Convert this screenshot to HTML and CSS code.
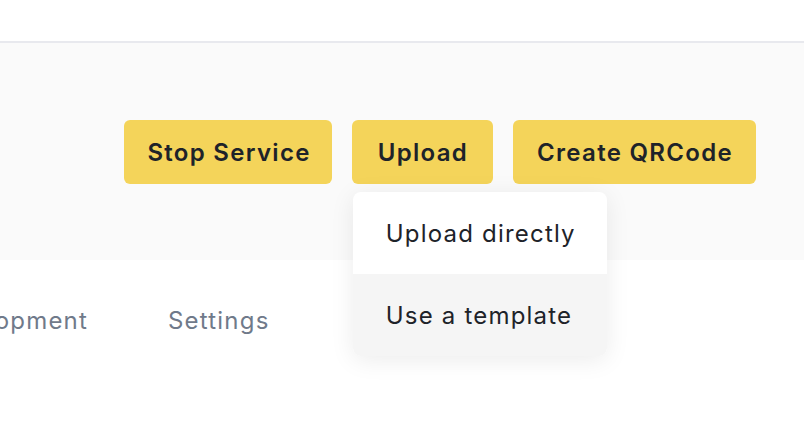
FILE: index.html
```html
<!DOCTYPE html>
<html lang="en">
<head>
  <meta charset="UTF-8" />
  <meta name="viewport" content="width=device-width, initial-scale=1.0" />
  <title>Mini Program - Service</title>
  <link rel="stylesheet" href="styles.css">
</head>
<body>
  <div class="topbar"></div>
  <div class="actions-band">
    <div class="actions">
      <button class="action-button stop-button">Stop Service</button>
      <div class="upload-wrap">
        <button class="action-button upload-button">Upload</button>
        <div class="dropdown">
          <div class="dropdown-item">Upload directly</div>
          <div class="dropdown-item hovered">Use a template</div>
        </div>
      </div>
      <button class="action-button">Create QRCode</button>
    </div>
  </div>
  <div class="tabs">
    <div class="tab">Development</div>
    <div class="tab">Settings</div>
  </div>
</body>
</html>
```

FILE: styles.css
```css
* {
  box-sizing: border-box;
}
body {
  margin: 0;
  font-family: Inter, 'Noto Sans', sans-serif;
  background: #fff;
  color: #1e2329;
  overflow: hidden;
}
.topbar {
  height: 43px;
  background: #fff;
  border-bottom: 2px solid #e8e9ee;
}
.actions-band {
  height: 217px;
  background: #fafafa;
  padding: 77px 48px 0 0;
}
.actions {
  display: flex;
  justify-content: flex-end;
  gap: 20px;
}
.action-button {
  height: 64px;
  padding: 0 23px 0 24px;
  border: none;
  border-radius: 6px;
  background: #f4d45a;
  color: #1e2329;
  font-family: inherit;
  font-size: 24px;
  font-weight: 600;
  letter-spacing: 1.3px;
  cursor: pointer;
}
.stop-button {
  padding: 0 21px 0 23px;
}
.upload-button {
  padding: 0 25px 0 26px;
}
.upload-wrap {
  position: relative;
}
.dropdown {
  position: absolute;
  top: 72px;
  left: 1px;
  width: 254px;
  background: #fff;
  border-radius: 8px;
  overflow: hidden;
  box-shadow: 0 4px 24px rgba(0, 0, 0, 0.08);
  z-index: 10;
}
.dropdown-item {
  height: 82px;
  padding-left: 33px;
  display: flex;
  align-items: center;
  font-size: 24px;
  letter-spacing: 1.2px;
  color: #1e2329;
}
.dropdown-item.hovered {
  background: #f5f5f5;
}
.tabs {
  display: flex;
  gap: 80px;
  margin-left: -75px;
  height: 120px;
  padding-top: 46px;
}
.tab {
  font-size: 24px;
  letter-spacing: 1.2px;
  color: #707a8a;
}
```
